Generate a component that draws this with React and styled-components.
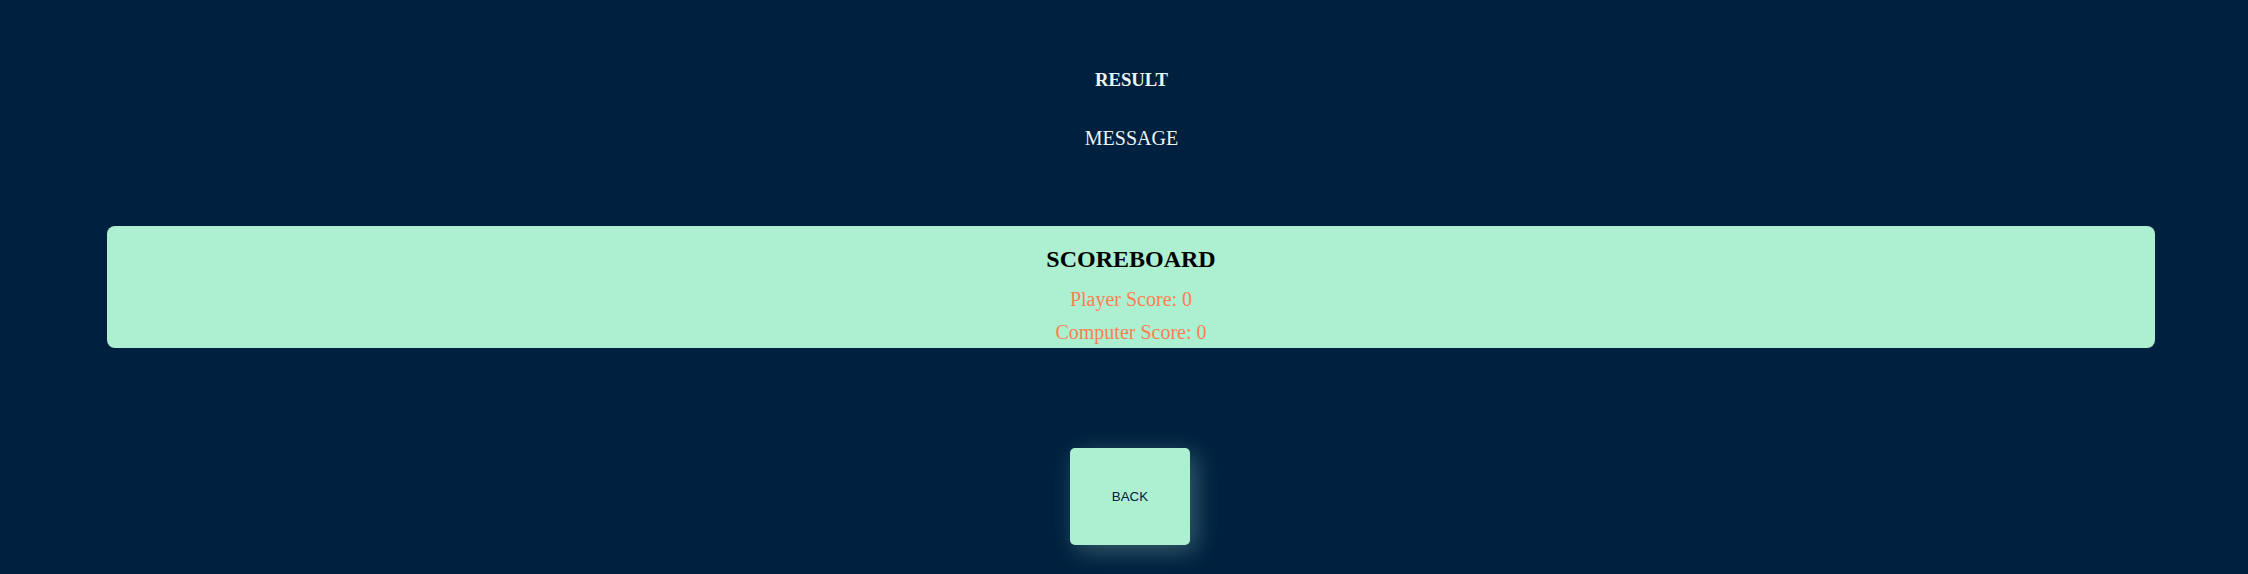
import React from 'react';
import styled, { createGlobalStyle } from 'styled-components';

const GlobalStyle = createGlobalStyle`
  html, body {
    margin: 0;
    padding: 0;
    background: #00203F;
    overflow: hidden;
  }
  body {
    font-family: "Liberation Serif", "Times New Roman", serif;
  }
`;

const Page = styled.div`
  height: 100vh;
  box-sizing: border-box;
  padding: 71px 0 0 15px;
  display: flex;
  flex-direction: column;
  align-items: center;
  background: #00203F;
`;

const Result = styled.h3`
  margin: 0;
  font-size: 18.72px;
  font-weight: 700;
  line-height: 1;
  color: #ECF5F2;
`;

const Message = styled.p`
  margin: 38px 0 0;
  font-size: 20px;
  line-height: 1;
  color: #ECF5F2;
`;

const Board = styled.div`
  align-self: stretch;
  margin: 78px 93px 0 92px;
  padding: 21px 0 6px;
  background: #ADEFD1;
  border-radius: 8px;
  display: flex;
  flex-direction: column;
  align-items: center;
`;

const BoardTitle = styled.h2`
  margin: 0;
  font-size: 24px;
  font-weight: 700;
  line-height: 1;
  color: #000;
`;

const Score = styled.p`
  margin: ${({ first }) => (first ? '18px' : '13px')} 0 0;
  font-size: 20px;
  line-height: 1;
  color: coral;
`;

const BackButton = styled.button`
  flex-shrink: 0;
  margin: 100px 3px 0 0;
  padding: 41px 41.5px;
  border: none;
  border-radius: 5px;
  background: #ADEFD1;
  color: #00203F;
  font-family: "Liberation Sans", Arial, sans-serif;
  font-size: 13.33px;
  line-height: 15px;
  cursor: pointer;
  box-shadow: 6px 6px 24px rgba(173, 239, 209, 0.3);
`;

const App = () => {
  const playerScore = 0;
  const computerScore = 0;

  return (
    <>
      <GlobalStyle />
      <Page>
        <Result>RESULT</Result>
        <Message>MESSAGE</Message>
        <Board>
          <BoardTitle>SCOREBOARD</BoardTitle>
          <Score first>Player Score: {playerScore}</Score>
          <Score>Computer Score: {computerScore}</Score>
        </Board>
        <BackButton>BACK</BackButton>
      </Page>
    </>
  );
};

export default App;
